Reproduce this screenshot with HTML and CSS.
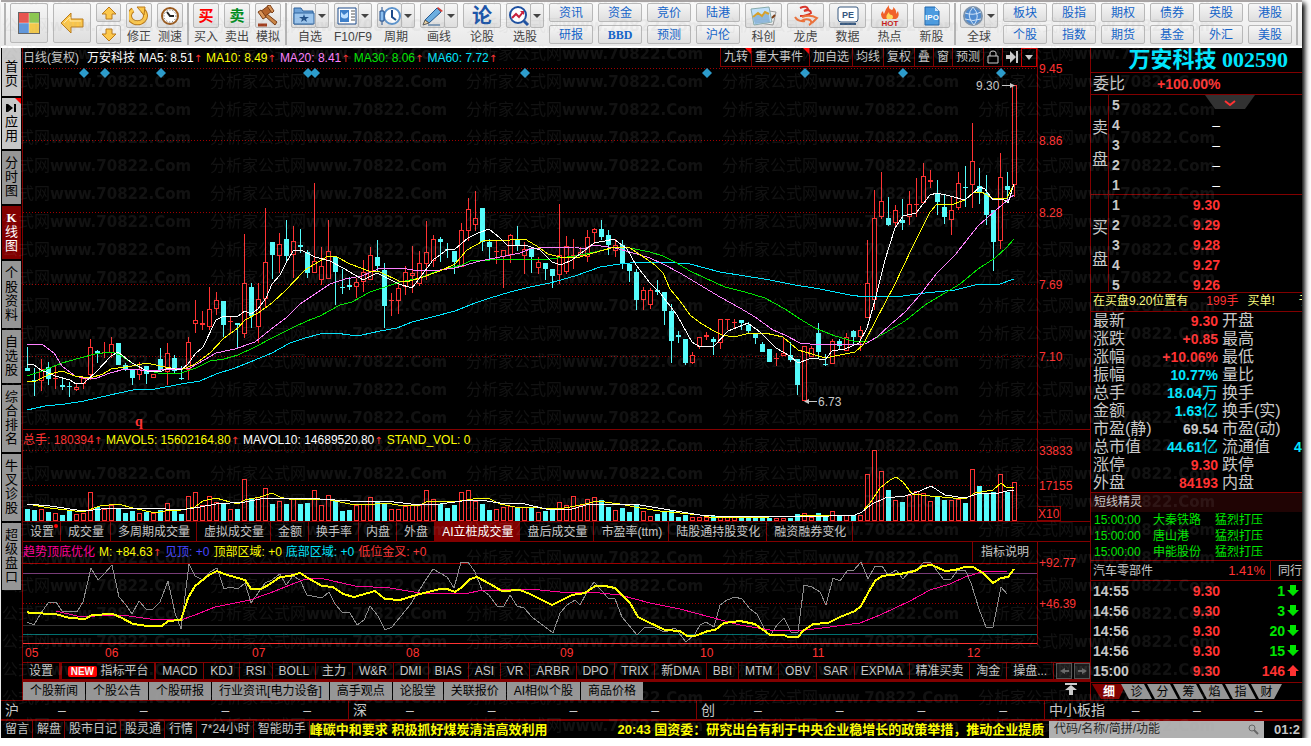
FILE: index.html
```html
<!DOCTYPE html>
<html lang="zh-CN">
<head>
    <meta charset="UTF-8">
    <meta name="viewport" content="width=device-width, initial-scale=1.0">
    <title>万安科技 002590</title>
    <link rel="stylesheet" href="styles.css">
</head>
<body>
<div class="app">
    <!-- Toolbar -->
    <header class="toolbar">
        <div class="group">
            <button class="big" aria-label="主页"><svg width="22" height="22" viewBox="0 0 22 22"><path fill="#666" d="M0 0h22v22H0z"/><path fill="#e8564f" d="M1 1h10v10H1z"/><path fill="#8cc751" d="M11 1h10v10H11z"/><path fill="#5f97dd" d="M1 11h10v10H1z"/><path fill="#f3c94b" d="M11 11h10v10H11z"/><path stroke="#fff" stroke-opacity=".4" d="M11 1v20M1 11h20"/></svg></button>
            <button class="big" aria-label="后退"><svg width="24" height="22" viewBox="0 0 24 22"><path d="M1 11 11 1v6h12v8H11v6z" fill="#fcc84c" stroke="#b97a1c"/><path d="M4 11l6-6v4h11" fill="none" stroke="#ffe9a8"/></svg></button>
            <div class="pair arrows">
                <button aria-label="向上"><svg width="16" height="14" viewBox="0 0 16 14"><path d="M8 1l7 7h-4v5H5V8H1z" fill="#fcc84c" stroke="#b97a1c"/></svg></button>
                <button aria-label="向下"><svg width="16" height="14" viewBox="0 0 16 14"><path d="M8 13l7-7h-4V1H5v5H1z" fill="#fcc84c" stroke="#b97a1c"/></svg></button>
            </div>
            <div class="tool small"><button id="t1"><svg width="20" height="20" viewBox="0 0 20 20"><path d="M4 4a8 7 0 1 0 9 0" fill="none" stroke="#b97a1c" stroke-width="5"/><path d="M4 4a8 7 0 1 0 9 0" fill="none" stroke="#fcc84c" stroke-width="3"/><path d="M8 1h8l-1 8z" fill="#fcc84c" stroke="#b97a1c"/></svg></button><label for="t1">修正</label></div>
            <div class="tool small"><button id="t2"><svg width="20" height="20" viewBox="0 0 20 20"><circle cx="10" cy="10" r="8" fill="#fff" stroke="#9a5a1e" stroke-width="2"/><circle cx="10" cy="10" r="6" fill="none" stroke="#555" stroke-dasharray="1 2"/><path d="M7 6l3 4h4" fill="none" stroke="#222" stroke-width="2"/></svg></button><label for="t2">测速</label></div>
        </div>
        <div class="group">
            <div class="tool small"><button id="t3" class="buy">买</button><label for="t3">买入</label></div>
            <div class="tool small"><button id="t4" class="sell">卖</button><label for="t4">卖出</label></div>
            <div class="tool small"><button id="t5"><svg width="22" height="22" viewBox="0 0 22 22"><path d="M10 9l10 8-2 3L8 11z" fill="#c98545" stroke="#7a3d16"/><path d="M3 7l8-6 4 5-8 6z" fill="#b5652c" stroke="#7a3d16"/><path d="M1 7l3-2 5 7-3 2zM10 1l3-1 4 6-2 2z" fill="#d9965a" stroke="#7a3d16"/><path d="M1 20h9" stroke="#a03c1c" stroke-width="3"/></svg></button><label for="t5">模拟</label></div>
        </div>
        <div class="group">
            <div class="tool"><div class="split"><button id="t6"><svg width="22" height="20" viewBox="0 0 22 20"><path d="M1 2h7l2 3h10v13H1z" fill="#6fa3d8" stroke="#2f639c"/><path d="M1 7h20v11H1z" fill="#9cc6ee" stroke="#2f639c"/><path d="M11 8l1 3h4l-3 2 1 3-3-2-3 2 1-3-3-2h4z" fill="#1f4e86"/></svg></button><button class="drop" aria-label="自选菜单"></button></div><label for="t6">自选</label></div>
            <div class="tool"><div class="split"><button id="t7"><svg width="20" height="18" viewBox="0 0 20 18"><path d="M1 1h18v16H1z" fill="#fff" stroke="#1c4a8a"/><path d="M3 3h9v12H3z" fill="#3e7fc9"/><path d="M4 5l3 3 4-3v5q-3 3-7 0z" fill="#bfe0ff"/><path d="M14 4h4M14 7h4M14 10h4M14 13h4" stroke="#555"/></svg></button><button class="drop" aria-label="F10菜单"></button></div><label for="t7">F10/F9</label></div>
            <div class="tool"><div class="split"><button id="t8"><svg width="22" height="20" viewBox="0 0 22 20"><circle cx="13" cy="10" r="8" fill="#fff" stroke="#5c93cc" stroke-width="2"/><path d="M13 4v7l4 3" fill="none" stroke="#1c4a8a" stroke-width="2"/><path d="M3 1v18" stroke="#1c4a8a"/><path d="M1 5h4v10H1z" fill="#8cc0f0" stroke="#1c4a8a"/></svg></button><button class="drop" aria-label="周期菜单"></button></div><label for="t8">周期</label></div>
            <div class="tool"><div class="split"><button id="t9"><svg width="22" height="20" viewBox="0 0 22 20"><path d="M3 14L15 2l4 4L7 17z" fill="#6caee0" stroke="#25588f"/><path d="M15 2l1-1 5 4-2 1z" fill="#d43e36"/><path d="M3 14l4 3-6 2z" fill="#f2d6a0" stroke="#555"/><path d="M6 19h12" stroke="#25588f"/></svg></button><button class="drop" aria-label="画线菜单"></button></div><label for="t9">画线</label></div>
            <div class="tool"><button id="t10" class="forum">论</button><label for="t10">论股</label></div>
            <div class="tool"><div class="split"><button id="t11"><svg width="22" height="22" viewBox="0 0 22 22"><circle cx="10" cy="10" r="8" fill="#fff" stroke="#1c4fa0" stroke-width="2"/><path d="M16 16l4 4" stroke="#1c4fa0" stroke-width="3"/><path d="M4 13l4-4 3 3 4-5" fill="none" stroke="#c8203c" stroke-width="2"/><path d="M12 6h4v4z" fill="#c8203c"/></svg></button><button class="drop" aria-label="选股菜单"></button></div><label for="t11">选股</label></div>
            <div class="pair"><button>资讯</button><button>研报</button></div>
            <div class="pair"><button>资金</button><button class="serif">BBD</button></div>
            <div class="pair"><button>竞价</button><button>预测</button></div>
            <div class="pair"><button>陆港</button><button>沪伦</button></div>
            <div class="tool mid"><button id="t12"><svg width="28" height="20" viewBox="0 0 28 20"><path d="M12 4l14 2-3 13-14-2z" fill="#eee" stroke="#999"/><path d="M1 3l18-2 3 15-18 3z" fill="#bfe0fa" stroke="#8aa"/><path d="M3 12l5-4 4 3 3-4 4 2 1 7-15 2z" fill="#8fb8dc"/><path d="M3 11l5-4 4 3 3-4 4 2" fill="none" stroke="#d6a02c" stroke-width="2"/><path d="M22 12l3-3" stroke="#7a3d16" stroke-width="2"/></svg></button><label for="t12">科创</label></div>
            <div class="tool mid"><button id="t13"><svg width="28" height="22" viewBox="0 0 28 22"><path d="M8 3q7-3 8 1l-4 2q7-2 7 2-4 3-11 3" fill="none" stroke="#d8362c" stroke-width="2"/><path d="M10 12q8-3 15 1l-5 5M9 16q5-3 9-1 3 3-1 5M3 12q3 5 10 4" fill="none" stroke="#ee7038" stroke-width="2"/></svg></button><label for="t13">龙虎</label></div>
            <div class="tool mid"><button id="t14"><svg width="22" height="20" viewBox="0 0 22 20"><path d="M1 3q0-2 2-2h16q2 0 2 2v10q0 3-3 3H4q-3 0-3-3z" fill="#fff" stroke="#35577f"/><path d="M3 18h16" stroke="#35577f" stroke-width="2"/><text x="11" y="12" text-anchor="middle" class="pe">PE</text></svg></button><label for="t14">数据</label></div>
            <div class="tool mid"><button id="t15"><svg width="22" height="22" viewBox="0 0 22 22"><path d="M4 14q-4-5 0-8 0 2 1 3Q7 3 10 0q-1 4 3 5 2-1 1-3 4 3 3 7l2-3q2 6-2 8z" fill="#f0622a"/><path d="M8 14q-2-3 2-7 0 3 3 3 2 2 0 4z" fill="#ffd85a"/><text x="11" y="21" text-anchor="middle" class="hot">HOT</text></svg></button><label for="t15">热点</label></div>
            <div class="tool mid"><button id="t16"><svg width="18" height="20" viewBox="0 0 18 20"><path d="M2 1h10l4 4v14H2z" fill="#4b9be0" stroke="#1f66ad"/><path d="M12 1v4h4z" fill="#cfe6fb"/><text x="9" y="14" text-anchor="middle" class="ipo">IPO</text></svg></button><label for="t16">新股</label></div>
        </div>
        <div class="group">
            <div class="tool"><div class="split"><button id="t17"><svg width="22" height="22" viewBox="0 0 22 22"><circle cx="11" cy="11" r="9" fill="#4f8bd0" stroke="#7d93ab" stroke-width="2"/><path d="M3 8q8 3 16-1M3 14q8 3 16 0M11 2q-8 9 1 18M11 2q8 9 1 18" fill="none" stroke="#cfe3f8"/></svg></button><button class="drop" aria-label="全球菜单"></button></div><label for="t17">全球</label></div>
            <div class="pair"><button>板块</button><button>个股</button></div>
            <div class="pair"><button>股指</button><button>指数</button></div>
            <div class="pair"><button>期权</button><button>期货</button></div>
            <div class="pair"><button>债券</button><button>基金</button></div>
            <div class="pair"><button>英股</button><button>外汇</button></div>
            <div class="pair"><button>港股</button><button>美股</button></div>
        </div>
        <div class="group"></div>
    </header>

    <div class="main">
        <nav class="side">
            <a href="#" class="light tall">首页</a>
            <a href="#" class="light flag"><svg width="10" height="10" viewBox="0 0 10 10"><path d="M1 1v8M9 1v8" stroke="#000" stroke-width="2"/><path d="M2 1l5 4-5 4z"/></svg>应用</a>
            <a href="#">分时图</a>
            <a href="#" class="on"><b>K</b>线图</a>
            <a href="#">个股资料</a>
            <a href="#">自选股</a>
            <a href="#">综合排名</a>
            <a href="#">牛叉诊股</a>
            <a href="#">超级盘口</a>
        </nav>

        <main class="center">
            <section class="pane price">
                <div class="info">
                    <span>日线(复权)</span><span class="white name">万安科技</span>
                    <span class="white">MA5: 8.51<i>↑</i></span><span class="yellow">MA10: 8.49<i>↑</i></span><span class="pink">MA20: 8.41<i>↑</i></span><span class="green">MA30: 8.06<i>↑</i></span><span class="cyan">MA60: 7.72<i>↑</i></span>
                    <div class="actions">
                        <button class="flag">九转</button><button class="flag wide">重大事件</button><button>加自选</button><button>均线</button><button>复权</button><button>叠</button><button>窗</button><button>预测</button>
                        <button aria-label="锁定"><svg width="12" height="14" viewBox="0 0 12 14"><path d="M1 6h10v7H1zM3 6V3q0-2 3-2t3 2v3" fill="none" stroke="#ccc"/></svg></button>
                        <button aria-label="末端"><svg width="12" height="12" viewBox="0 0 12 12"><path d="M0 4h4V0l6 6-6 6V8H0z" fill="#ccc"/><path d="M11 0v12" stroke="#ccc" stroke-width="2"/></svg></button>
                        <button class="more" aria-label="更多"><svg width="8" height="5" viewBox="0 0 8 5"><path d="M0 0h8L4 5z" fill="#ccc"/></svg></button>
                    </div>
                </div>
                <svg class="plot" id="pricePlot" viewBox="23 67 1014 362" preserveAspectRatio="none"></svg>
                <ul class="axis"><li>9.45</li><li>8.86</li><li>8.28</li><li>7.69</li><li>7.10</li></ul>
            </section>

            <section class="pane volume">
                <div class="info">
                    <span class="red">总手: 180394<i>↑</i></span><span class="yellow">MAVOL5: 15602164.80<i>↑</i></span><span class="white">MAVOL10: 14689520.80<i>↑</i></span><span class="yellow">STAND_VOL: 0</span>
                </div>
                <svg class="plot" id="volumePlot" viewBox="23 449 1014 72" preserveAspectRatio="none"></svg>
                <ul class="axis"><li>33833</li><li>17155</li><li class="unit">X10</li></ul>
            </section>

            <nav class="tabs">
                <button class="dot">设置</button><button>成交量</button><button>多周期成交量</button><button>虚拟成交量</button><button>金额</button><button>换手率</button><button>内盘</button><button>外盘</button><button class="on">AI立桩成交量</button><button>盘后成交量</button><button>市盈率(ttm)</button><button>陆股通持股变化</button><button>融资融券变化</button>
            </nav>

            <section class="pane trend">
                <div class="info">
                    <span class="magenta">趋势顶底优化</span><span class="yellow">M: +84.63<i>↑</i></span><span class="blue">见顶: +0</span><span class="yellow">顶部区域: +0</span><span class="cyan">底部区域: +0</span><span class="red">低位金叉: +0</span>
                    <button class="explain">指标说明</button>
                </div>
                <svg class="plot" id="trendPlot" viewBox="23 562 1014 83" preserveAspectRatio="none"></svg>
                <ul class="axis"><li>+92.77</li><li>+46.39</li></ul>
            </section>

            <div class="dates"><span>05</span><span>06</span><span>07</span><span>08</span><span>09</span><span>10</span><span>11</span><span>12</span></div>

            <nav class="tabs indicators">
                <button>设置</button><button class="new"><em>NEW</em> 指标平台</button><button>MACD</button><button>KDJ</button><button>RSI</button><button>BOLL</button><button>主力</button><button>W&amp;R</button><button>DMI</button><button>BIAS</button><button>ASI</button><button>VR</button><button>ARBR</button><button>DPO</button><button>TRIX</button><button>新DMA</button><button>BBI</button><button>MTM</button><button>OBV</button><button>SAR</button><button>EXPMA</button><button>精准买卖</button><button>淘金</button><button>操盘...</button>
                <button class="scroll" aria-label="左移"><svg width="9" height="6" viewBox="0 0 9 6"><path d="M0 3l5-3v2h4v2H5v2z" fill="#666"/></svg></button><button class="scroll" aria-label="右移"><svg width="9" height="6" viewBox="0 0 9 6"><path d="M9 3L4 0v2H0v2h4v2z" fill="#666"/></svg></button>
            </nav>

            <nav class="news">
                <button>个股新闻</button><button>个股公告</button><button>个股研报</button><button>行业资讯[电力设备]</button><button>高手观点</button><button>论股堂</button><button>关联报价</button><button>AI相似个股</button><button>商品价格</button>
                <button class="top" aria-label="展开"><svg width="12" height="12" viewBox="0 0 12 12"><path d="M0 0h12v2H0zM6 2l6 5H8v5H4V7H0z" fill="#ccc"/></svg></button>
            </nav>
        </main>

        <aside class="quote">
            <h1>万安科技 002590</h1>
            <div class="ratio"><span>委比</span><b>+100.00%</b></div>
            <div class="levels">
                <div class="sidename">卖盘</div>
                <table>
                    <tr><th>5</th><td></td></tr>
                    <tr><th>4</th><td class="white">–</td></tr>
                    <tr><th>3</th><td class="white">–</td></tr>
                    <tr><th>2</th><td class="white">–</td></tr>
                    <tr><th>1</th><td class="white">–</td></tr>
                </table>
                <button class="fold" aria-label="展开盘口"><svg width="12" height="7" viewBox="0 0 12 7"><path d="M1 1l5 4 5-4" fill="none" stroke="#ff3232" stroke-width="2"/></svg></button>
            </div>
            <div class="levels bids">
                <div class="sidename">买盘</div>
                <table>
                    <tr><th>1</th><td>9.30</td></tr>
                    <tr><th>2</th><td>9.29</td></tr>
                    <tr><th>3</th><td>9.28</td></tr>
                    <tr><th>4</th><td>9.27</td></tr>
                    <tr><th>5</th><td>9.26</td></tr>
                </table>
            </div>
            <div class="notice"><span>在买盘9.20位置有</span><span class="red">199手</span><span>买单!</span><span class="next">于</span></div>
            <table class="detail">
                <tr><th>最新</th><td>9.30</td><th>开盘</th><td></td></tr>
                <tr><th>涨跌</th><td>+0.85</td><th>最高</th><td></td></tr>
                <tr><th>涨幅</th><td>+10.06%</td><th>最低</th><td></td></tr>
                <tr><th>振幅</th><td class="cyan">10.77%</td><th>量比</th><td></td></tr>
                <tr><th>总手</th><td class="cyan">18.04<span>万</span></td><th>换手</th><td></td></tr>
                <tr><th>金额</th><td class="cyan">1.63<span>亿</span></td><th>换手(实)</th><td></td></tr>
                <tr><th>市盈(静)</th><td class="gray">69.54</td><th>市盈(动)</th><td></td></tr>
                <tr><th>总市值</th><td class="cyan">44.61<span>亿</span></td><th>流通值</th><td class="cyan">4</td></tr>
                <tr><th>涨停</th><td>9.30</td><th>跌停</th><td></td></tr>
                <tr><th>外盘</th><td>84193</td><th>内盘</th><td></td></tr>
            </table>
            <h2>短线精灵</h2>
            <table class="alerts">
                <tr><td>15:00:00</td><td>大秦铁路</td><td>猛烈打压</td></tr>
                <tr><td>15:00:00</td><td>唐山港</td><td>猛烈打压</td></tr>
                <tr><td>15:00:00</td><td>申能股份</td><td>猛烈打压</td></tr>
            </table>
            <div class="sector"><span>汽车零部件</span><span class="red">1.41%</span><a href="#">同行</a></div>
            <table class="ticks">
                <tr><th>14:55</th><td>9.30</td><td class="down">1</td><td><svg width="12" height="12" viewBox="0 0 12 12"><path d="M3 0h6v5h3l-6 6-6-6h3z" fill="#00e600"/></svg></td></tr>
                <tr><th>14:56</th><td>9.30</td><td class="down">3</td><td><svg width="12" height="12" viewBox="0 0 12 12"><path d="M3 0h6v5h3l-6 6-6-6h3z" fill="#00e600"/></svg></td></tr>
                <tr><th>14:56</th><td>9.30</td><td class="down">20</td><td><svg width="12" height="12" viewBox="0 0 12 12"><path d="M3 0h6v5h3l-6 6-6-6h3z" fill="#00e600"/></svg></td></tr>
                <tr><th>14:56</th><td>9.30</td><td class="down">15</td><td><svg width="12" height="12" viewBox="0 0 12 12"><path d="M3 0h6v5h3l-6 6-6-6h3z" fill="#00e600"/></svg></td></tr>
                <tr><th>15:00</th><td>9.30</td><td>146</td><td><svg width="12" height="12" viewBox="0 0 12 12"><path d="M3 11h6V6h3L6 0 0 6h3z" fill="#ff3232"/></svg></td></tr>
            </table>
            <nav class="slants"><button class="on">细</button><button>诊</button><button>分</button><button>筹</button><button>焰</button><button>指</button><button>财</button></nav>
        </aside>
    </div>

    <div class="indexes">
        <div><span>沪</span><i>–</i><i>–</i><i>–</i><i>–</i></div>
        <div><span>深</span><i>–</i><i>–</i><i>–</i><i>–</i></div>
        <div><span>创</span><i>–</i><i>–</i><i>–</i><i>–</i></div>
        <div class="sme"><span>中小板指</span><i>–</i><i>–</i><i>–</i></div>
    </div>

    <footer class="status">
        <a href="#">留言</a><a href="#">解盘</a><a href="#">股市日记</a><a href="#">股灵通</a><a href="#">行情</a><a href="#">7*24小时</a><a href="#">智能助手</a>
        <div class="marquee"><span>峰碳中和要求 积极抓好煤炭清洁高效利用</span><span>20:43 国资委：研究出台有利于中央企业稳增长的政策举措，推动企业提质</span></div>
        <div class="search"><input type="text" placeholder="代码/名称/简拼/功能" aria-label="代码/名称/简拼/功能"><svg width="11" height="11" viewBox="0 0 11 11"><circle cx="4" cy="4" r="3" fill="none" stroke="#666"/><path d="M6 6l4 4" stroke="#666" stroke-width="2"/></svg></div>
        <time>01:2</time>
    </footer>

    <svg class="watermark" aria-hidden="true">
        <defs>
            <pattern id="mark" x="-46" y="11" width="256" height="28" patternUnits="userSpaceOnUse">
                <text x="0" y="20" class="mark-cn">分析家公式网</text>
                <text x="96" y="20" class="mark-en">www.70822.Com</text>
            </pattern>
        </defs>
        <rect width="100%" height="100%" fill="url(#mark)"/>
    </svg>
</div>
<script src="script.js"></script>
</body>
</html>
```
FILE: styles.css
```css
* {
    box-sizing: border-box;
}
body {
    margin: 0;
    background: #fff;
    color: #c8c8c8;
    font: 12px/18px "Liberation Sans", "Noto Sans CJK SC", sans-serif;
    overflow: hidden;
}
button, input {
    font: inherit;
    color: inherit;
    margin: 0;
    padding: 0;
    border: 0;
    background: none;
}
a {
    color: inherit;
    text-decoration: none;
}
i, em {
    font-style: normal;
}
table {
    border-collapse: collapse;
    table-layout: fixed;
}
th, td {
    padding: 0;
}
ul {
    list-style: none;
    margin: 0;
    padding: 0;
}
.white { color: #fff; }
.yellow { color: #ff0; }
.pink { color: #ff80ff; }
.green { color: #00e600; }
.cyan { color: #00e6ff; }
.red { color: #ff3232; }
.magenta { color: #ff0096; }
.blue { color: #4646ff; }

.app {
    position: relative;
    display: flex;
    flex-direction: column;
    height: calc(100vh - 8px);
    margin: 0 9px 0 1px;
    background: #000;
    overflow: hidden;
    box-shadow: 3px 3px 5px #000;
}

/* toolbar */
.toolbar {
    display: flex;
    height: 48px;
    flex: none;
    padding: 1px 0 1px 3px;
    background: linear-gradient(#fafafa, #e8e8e8);
    border-top: 2px solid #a8a4a4;
    border-bottom: 2px solid #fff;
    color: #444;
    overflow: hidden;
}
.group {
    display: flex;
    flex: none;
    gap: 5px;
    margin-right: 4px;
    padding-left: 4px;
    border-left: 2px solid #b4b4b4;
}
.toolbar button {
    display: flex;
    align-items: center;
    justify-content: center;
    border: 1px solid #b8b8b8;
    border-radius: 2px;
    background: linear-gradient(#f6f6f6, #dedede);
}
.toolbar .big {
    width: 38px;
    height: 40px;
}
.pair {
    display: flex;
    flex-direction: column;
    gap: 3px;
    width: 44px;
    color: #1464c8;
}
.toolbar .pair button {
    height: 19px;
    width: 100%;
    line-height: 16px;
}
.pair.arrows {
    width: 25px;
}
.pair .serif {
    font-family: "Liberation Serif", serif;
    font-weight: bold;
}
.tool {
    display: flex;
    flex-direction: column;
    width: 38px;
    text-align: center;
    white-space: nowrap;
}
.tool.small {
    width: 26px;
}
.tool.mid {
    width: 37px;
}
.tool button {
    flex: none;
    height: 25px;
    width: 100%;
}
.tool label {
    flex: none;
    line-height: 19px;
}
.split {
    display: flex;
    flex: none;
}
.split button {
    flex: 1;
}
.split .drop {
    width: 14px;
    flex: none;
    margin-left: -1px;
}
.drop::after {
    content: "";
    border: 4px solid transparent;
    border-top-color: #444;
    border-bottom: 0;
}
.toolbar .buy, .toolbar .sell {
    font-size: 15px;
    font-weight: bold;
    color: #f00;
}
.toolbar .sell {
    color: #008c1e;
}
.toolbar .forum {
    font-size: 20px;
    font-weight: bold;
    color: #1c55a8;
}
.pe, .hot, .ipo {
    font: bold 9px "Liberation Sans", sans-serif;
    fill: #35577f;
}
.hot {
    font-size: 8px;
    fill: #c81414;
}
.ipo {
    font-size: 8px;
    fill: #fff;
}

/* left navigation */
.main {
    display: flex;
    flex: 1;
    min-height: 0;
}
.side {
    display: flex;
    flex-direction: column;
    gap: 2px;
    width: 21px;
    flex: none;
    padding: 0 1px;
}
.side a {
    position: relative;
    padding: 5px 3px 6px;
    background: #969696;
    color: #000;
    font-size: 13px;
    line-height: 14px;
    text-align: center;
    word-break: break-all;
}
.side .light {
    background: #c8c8c8;
}
.side .tall {
    padding-top: 12px;
    padding-bottom: 8px;
}
.side .on {
    background: #820000;
    color: #fff;
}
.side svg {
    display: block;
    margin: 0 1px 2px;
}
.side b {
    font-family: "Liberation Serif", serif;
    display: block;
}
.flag {
    position: relative;
}
.flag::after {
    content: "";
    position: absolute;
    top: 0;
    right: 0;
    border: 3px solid #f00;
    border-left-color: transparent;
    border-bottom-color: transparent;
}

/* charts */
.center {
    display: flex;
    flex-direction: column;
    flex: 1;
    min-width: 0;
    border-left: 1px solid #820000;
}
.pane {
    display: grid;
    grid-template-columns: 1fr 53px;
    grid-template-rows: 19px 1fr;
    border-bottom: 1px solid #820000;
}
.price {
    flex: 1;
    min-height: 0;
}
.volume {
    height: 92px;
}
.trend {
    height: 103px;
    grid-template-rows: 20px 1fr;
    border-bottom: 0;
}
.info {
    display: flex;
    gap: 4px;
    min-width: 0;
    line-height: 20px;
    white-space: nowrap;
}
.info i {
    color: #ff3232;
    font-family: "DejaVu Sans", sans-serif;
    font-size: 10px;
    line-height: 12px;
}
.name {
    margin-left: 4px;
}
.actions {
    display: flex;
    margin-left: auto;
}
.actions button {
    display: flex;
    align-items: center;
    padding: 0 3px;
    border-left: 1px solid #820000;
    border-bottom: 1px solid #820000;
}
.actions .wide {
    padding-right: 6px;
}
.actions .more {
    border: 1px solid #c80000;
}
.explain {
    margin-left: auto;
    padding: 0 8px;
    border-left: 1px solid #820000;
}
.plot {
    display: block;
    width: 100%;
    height: 100%;
    min-height: 0;
    grid-column: 1;
    grid-row: 2;
}
.plot text {
    font-size: 12px;
    fill: #c8c8c8;
}
.plot .sign {
    font: bold 14px "Liberation Serif", serif;
    fill: #ff3232;
}
.axis {
    display: flex;
    flex-direction: column;
    grid-column: 2;
    grid-row: 1 / 3;
    padding: 13px 0 8px 1px;
    border-left: 1px solid #820000;
    color: #ff3232;
    line-height: 16px;
}
.axis li {
    flex: 1;
}
.volume li, .trend li {
    flex: none;
    height: 35px;
}
.volume .axis {
    position: relative;
    padding-bottom: 0;
}
.volume .unit {
    position: absolute;
    left: 0;
    bottom: 0;
    height: 15px;
    line-height: 14px;
    padding-right: 1px;
    border: 1px solid #820000;
    border-left: 0;
}
.trend li {
    height: 41px;
}
.dates {
    display: grid;
    grid-template-columns: 80fr 147fr 154fr 154fr 140fr 112fr 155fr 70fr;
    height: 17px;
    padding: 0 53px 0 2px;
    color: #ff3232;
    line-height: 16px;
}

/* tab rows */
.tabs {
    display: flex;
    height: 20px;
    border-bottom: 1px solid #820000;
    white-space: nowrap;
}
.tabs button {
    position: relative;
    padding: 0 6px 0 7px;
    border-right: 1px solid #820000;
    line-height: 18px;
}
.tabs .on {
    background: #820000;
    color: #fff;
}
.tabs .dot::after {
    content: "";
    position: absolute;
    top: 2px;
    right: 2px;
    width: 4px;
    height: 4px;
    border-radius: 2px;
    background: #f00;
}
.indicators {
    border-top: 1px solid #820000;
    border-bottom-width: 3px;
}
.indicators button {
    flex: 1 1 auto;
    padding: 0 2px;
    line-height: 16px;
}
.indicators .new {
    border-left: 2px solid #820000;
    border-right-width: 2px;
}
.indicators em {
    display: inline-block;
    padding: 0 3px;
    border-radius: 2px;
    background: #f00;
    color: #fff;
    font-size: 10px;
    font-weight: bold;
    line-height: 11px;
}
.indicators .scroll {
    display: flex;
    align-items: center;
    justify-content: center;
    flex: none;
    width: 16px;
    margin-left: 2px;
    border: 1px solid #555;
    background: #1c1c1c;
}
.news {
    display: flex;
    gap: 1px;
    height: 18px;
    white-space: nowrap;
}
.news button {
    padding: 0 7px;
    background: #969696;
    color: #000;
    line-height: 17px;
}
.news .top {
    margin-left: auto;
    margin-right: 6px;
    background: none;
}

/* quote panel */
.quote {
    width: 212px;
    flex: none;
    border-left: 1px solid #820000;
    overflow: hidden;
    white-space: nowrap;
    font-size: 16px;
}
.quote b, .quote td {
    font: bold 14px/18px "Liberation Sans", "Noto Sans CJK SC", sans-serif;
    color: #ff3232;
}
.quote th {
    font-weight: normal;
    text-align: left;
}
h1 {
    margin: 0;
    padding-right: 14px;
    height: 25px;
    border-bottom: 1px solid #820000;
    color: #00e6ff;
    font: bold 22px/24px "Liberation Serif", "Noto Sans CJK SC", serif;
    text-align: right;
}
.ratio {
    display: flex;
    gap: 32px;
    height: 22px;
    padding-left: 2px;
    border-bottom: 1px solid #820000;
    line-height: 22px;
}
.quote .ratio b {
    line-height: 22px;
}
.levels {
    position: relative;
    display: flex;
    height: 100px;
    border-bottom: 1px solid #820000;
}
.bids {
    height: 98px;
}
.sidename {
    width: 18px;
    padding: 17px 1px 0;
    border-right: 1px solid #820000;
    line-height: 32px;
    white-space: normal;
}
.levels table {
    width: 111px;
    height: 100px;
}
.levels tr, .ticks tr {
    height: 20px;
}
.levels th {
    width: 16px;
    padding-left: 3px;
    font: bold 14px/18px "Liberation Sans", sans-serif;
}
.levels td {
    text-align: right;
}
.quote td.white {
    color: #fff;
    font-weight: normal;
}
.quote td.cyan { color: #00e6ff; }
.quote td.gray { color: #c8c8c8; }
.quote td.down { color: #00e600; }
.fold {
    position: absolute;
    left: 114px;
    top: 0;
    width: 50px;
    height: 14px;
    background: #323232;
    clip-path: polygon(0 0, 100% 0, 40px 100%, 10px 100%);
    line-height: 10px;
}
.notice {
    display: flex;
    height: 19px;
    padding-left: 2px;
    border-bottom: 1px solid #820000;
    color: #ffff80;
    font-size: 12px;
    line-height: 17px;
}
.notice .red {
    margin: 0 9px 0 18px;
}
.notice .next {
    margin-left: 24px;
}
.detail {
    width: 211px;
}
.detail tr {
    height: 18px;
}
.detail th {
    width: 60px;
    padding-left: 2px;
    line-height: 18px;
}
.detail td {
    width: 67px;
    text-align: right;
}
.detail td + th {
    width: 76px;
    padding-left: 4px;
}
.detail td:last-child {
    width: auto;
    text-align: left;
}
.detail td span {
    font-size: 16px;
    font-weight: normal;
}
h2 {
    margin: 0;
    padding-left: 3px;
    height: 20px;
    border-top: 1px solid #820000;
    background: #200404;
    font-size: 12px;
    font-weight: normal;
    line-height: 19px;
}
.alerts {
    width: 100%;
}
.alerts tr {
    height: 16px;
}
.quote .alerts td {
    padding-left: 3px;
    color: #00e600;
    font-size: 12px;
    font-weight: normal;
    line-height: 16px;
}
.alerts td:first-child {
    width: 59px;
}
.alerts td:nth-child(2) {
    width: 62px;
}
.sector {
    display: flex;
    height: 21px;
    padding-left: 2px;
    border-top: 1px solid #820000;
    border-bottom: 1px solid #820000;
    font-size: 12px;
    line-height: 20px;
}
.sector .red {
    margin: 0 5px 0 auto;
    font-size: 13px;
}
.sector a {
    width: 32px;
    padding-left: 7px;
    border-left: 1px solid #820000;
}
.ticks {
    width: 210px;
    margin-bottom: 1px;
}
.ticks th {
    width: 60px;
    padding-left: 2px;
    font: bold 14px/20px "Liberation Sans", sans-serif;
}
.ticks td {
    width: 69px;
    text-align: right;
}
.ticks td:nth-child(3) {
    width: 65px;
}
.ticks td:last-child {
    width: auto;
    padding-right: 2px;
    line-height: 10px;
}
.slants {
    display: flex;
    height: 18px;
    padding: 1px 0 1px 1px;
    border-top: 1px solid #820000;
}
.slants button {
    width: 31px;
    margin-right: -5px;
    background: #969696;
    color: #000;
    font-size: 12px;
    line-height: 16px;
    clip-path: polygon(0 0, 23px 0, 100% 100%, 8px 100%);
}
.slants .on {
    width: 34px;
    background: #820000;
    color: #fff;
    font-weight: bold;
    clip-path: polygon(0 0, 100% 0, 27px 100%, 9px 100%);
}
.slants button:last-child {
    clip-path: polygon(0 0, 100% 0, 23px 100%, 8px 100%);
}

/* bottom rows */
.indexes {
    display: flex;
    flex: none;
    height: 21px;
    border-top: 1px solid #820000;
    border-bottom: 2px solid #820000;
    font-size: 14px;
}
.indexes div {
    display: flex;
    flex: 1;
    padding-left: 4px;
    border-right: 1px solid #820000;
}
.indexes span {
    width: 16px;
}
.indexes i {
    flex: 1;
    text-align: center;
}
.indexes .sme {
    flex: 0 0 257px;
    padding-right: 13px;
    border-right: 0;
}
.indexes .sme span {
    width: 56px;
}
.status {
    display: flex;
    flex: none;
    height: 17px;
    line-height: 17px;
    white-space: nowrap;
}
.status a {
    padding: 0 3px 0 4px;
    border-right: 1px solid #820000;
}
.marquee {
    display: flex;
    gap: 70px;
    flex: 1;
    min-width: 0;
    overflow: hidden;
    color: #ff0;
    font-size: 13px;
    font-weight: bold;
}
.search {
    display: flex;
    align-items: center;
    width: 215px;
    padding: 0 5px;
    background: #b0b0b0;
}
.search input {
    flex: 1;
    min-width: 0;
    height: 17px;
    color: #000;
}
.search input::placeholder {
    color: #222;
    opacity: 1;
}
.status time {
    width: 38px;
    padding-left: 10px;
    font-size: 13px;
    font-weight: bold;
}
.watermark {
    position: absolute;
    left: -1px;
    top: 0;
    width: calc(100% - 87px);
    height: 100%;
    pointer-events: none;
    opacity: .11;
}
.mark-cn {
    font: 16px "Noto Sans CJK SC", sans-serif;
    fill: #a0a0a0;
}
.mark-en {
    font: bold 15px "DejaVu Sans", sans-serif;
    fill: #a0a0a0;
}
```
FILE: script.js
```js
// one candle per entry: high, body top, body bottom, low, direction, volume
const candles = `
347 368 371 371 d 12|368 380 381 396 d 11|359 369 381 391 u 12|362 367 379 385 d 9|366 378 379 389 u 8|378 385 387 390 d 6
382 386 387 397 d 10|384 387 390 391 u 7|377 378 384 389 u 8|339 347 375 380 u 29|350 351 353 363 d 14|342 352 353 358 u 12
337 344 353 358 u 16|343 343 365 365 d 12|363 365 370 371 d 8|369 369 378 385 d 10|362 369 375 380 u 8|366 366 374 384 d 9
374 374 378 378 u 8|348 359 370 371 d 11|343 353 372 385 u 18|355 358 371 373 d 11|366 378 379 380 d 7|337 342 370 380 u 25
300 320 324 333 u 29|311 323 325 330 u 16|287 309 327 330 u 25|292 300 309 315 u 19|301 301 325 337 d 17|317 321 322 334 u 12
323 323 325 348 d 12|234 283 334 338 u 42|283 287 316 328 d 23|283 299 327 343 u 24|208 262 299 307 u 33|242 242 255 279 d 17
233 244 256 273 u 20|220 239 256 262 d 17|226 241 255 278 u 23|229 245 247 253 d 17|250 252 273 278 d 18|183 261 273 273 u 31
247 266 280 285 u 16|220 251 279 279 u 26|257 257 272 305 d 21|269 287 288 294 d 10|277 285 287 290 d 11|278 282 287 298 u 16
260 272 282 292 u 17|247 255 280 280 u 24|240 257 266 272 d 19|263 270 306 328 d 17|293 300 301 316 u 12|280 288 301 314 u 12
266 272 287 295 u 15|246 273 276 293 u 16|251 263 284 286 u 16|221 252 264 280 u 31|235 239 261 267 u 22|237 239 242 262 d 17
243 249 250 258 d 13|251 251 262 274 d 16|223 230 267 267 u 29|198 209 231 241 u 31|191 218 225 231 u 20|208 208 242 251 d 17
239 242 247 260 d 11|241 251 252 264 u 12|250 250 257 288 u 14|234 235 255 263 u 15|226 239 246 251 d 13|242 249 256 274 u 14
248 248 257 273 d 14|257 262 268 274 u 9|263 263 269 280 d 10|269 269 276 288 d 11|204 255 275 284 u 19|236 246 272 274 u 16
239 255 257 269 u 25|247 252 256 256 u 16|230 237 257 262 u 22|228 229 233 244 u 24|220 229 237 240 d 21|230 235 245 255 d 14
239 245 251 257 u 11|240 245 264 269 d 13|264 264 271 282 d 9|269 272 300 310 d 17|287 290 300 310 u 10|288 290 305 309 u 5
280 290 292 295 d 7|292 292 311 325 d 9|304 311 341 363 d 11|331 335 337 343 d 4|339 339 363 365 d 6|352 355 363 364 u 4
337 337 347 349 u 4|332 335 337 340 u 4|337 339 342 355 d 5|319 319 343 349 u 4|319 319 320 330 u 4|319 322 323 328 u 4
320 320 323 330 d 3|322 325 331 334 d 4|333 333 338 344 d 5|342 344 352 352 d 4|349 349 362 362 d 3|353 358 359 366 u 3
338 353 356 356 u 3|342 355 360 362 d 3|359 359 385 395 d 7|346 346 401 401 u 8|346 348 357 357 u 4|323 333 352 359 d 8
354 364 365 366 d 4|339 341 364 364 u 10|339 341 346 349 d 5|333 337 351 351 u 6|330 331 337 344 d 6|326 330 337 351 u 6
240 283 318 318 u 47|190 218 300 310 u 71|172 201 217 219 u 50|197 218 225 226 d 31|205 210 223 227 u 21|199 220 223 230 d 19
191 204 217 225 u 26|178 204 205 217 u 30|163 176 203 203 u 28|170 180 182 188 u 20|180 193 202 215 d 25|194 207 217 224 d 21
196 210 220 235 u 21|172 183 208 210 u 22|166 187 188 207 d 18|123 161 185 208 u 52|168 186 192 204 d 35|175 193 215 225 d 27
210 210 242 271 d 29|153 177 241 249 u 47|172 186 190 203 d 29|85 85 185 197 u 39`
    .trim().split(/[|\n]/).map(c => c.split(' '));

const ma5 = '27,365 33,364 41,370 55,376 70,380 76,384 84,383 97,371 111,356 118,352 132,363 147,371 160,372 168,368 181,370 188,364 195,354 203,347 216,320 224,316 238,316 245,311 251,314 258,309 266,298 272,284 280,275 286,263 293,251 301,250 315,257 330,261 345,269 363,280 377,273 385,277 399,284 412,288 425,271 433,260 448,249 455,249 468,238 478,233 489,229 500,238 507,245 528,246 540,250 552,262 561,265 572,260 580,254 594,243 605,241 614,239 627,249 636,265 650,283 660,293 677,315 692,342 700,347 714,346 728,331 748,323 760,332 776,348 790,356 798,363 812,358 825,360 832,351 845,349 859,343 867,328 875,300 885,260 895,228 903,216 916,213 930,195 937,193 950,196 965,200 980,187 985,189 993,200 1003,199 1008,203 1014,184';
const ma10 = '27,381 36,381 50,374 62,371 75,376 90,378 103,374 111,369 132,366 147,363 160,366 181,370 195,364 210,353 224,338 238,328 245,320 258,313 272,303 286,290 305,270 328,256 337,257 350,264 369,271 380,272 399,281 406,282 420,278 440,271 455,264 467,250 483,241 510,240 525,239 540,248 548,254 560,257 580,257 600,251 615,247 630,248 645,258 655,265 663,273 670,289 680,301 690,315 699,322 712,330 722,335 734,337 750,333 765,333 783,337 798,350 812,354 825,358 840,355 855,352 863,345 876,320 895,284 912,248 930,212 937,204 951,205 965,200 973,193 982,192 993,199 1007,198 1014,184';
const ma20 = '27,344 42,344 54,353 62,366 75,376 83,378 97,378 110,373 125,369 140,370 160,370 175,369 190,368 204,360 216,353 235,349 255,342 270,330 286,318 300,304 315,294 330,284 345,279 362,276 378,269 400,268 420,271 440,270 455,268 480,261 500,257 520,253 530,249 540,248 575,247 583,249 594,245 615,248 630,252 650,258 663,264 680,273 700,285 720,297 740,308 755,317 773,330 785,335 800,343 820,345 865,344 877,337 890,325 905,312 920,295 937,273 955,255 978,226 995,211 1010,198 1014,195';
const ma30 = '27,376 42,371 62,363 80,358 95,354 112,352 120,355 132,363 145,370 158,373 181,373 196,368 210,361 224,359 238,355 255,347 272,338 292,328 307,321 320,316 340,305 352,302 370,292 400,282 420,278 440,270 462,265 472,260 490,260 525,259 550,259 575,256 595,252 615,247 630,248 650,252 663,256 675,262 690,271 705,278 725,287 745,292 765,298 785,309 800,319 815,328 835,336 853,341 870,341 885,333 905,321 925,305 945,293 960,284 978,269 995,258 1007,247 1014,239';
const ma60 = '27,410 45,406 65,404 84,401 110,395 133,390 155,389 181,384 200,381 216,374 235,368 255,360 272,353 290,343 305,338 320,334 335,333 350,335 362,335 380,331 397,328 412,322 432,317 455,311 475,303 490,298 510,292 530,287 550,283 575,276 600,267 620,264 640,262 663,262 690,264 720,272 745,276 770,280 795,285 820,289 850,295 865,297 885,296 903,296 925,293 955,290 975,285 1000,284 1014,279';

const vol5 = '27,504 50,508 83,512 100,506 118,504 133,508 155,513 165,511 181,510 195,507 203,501 216,498 230,502 238,504 245,500 260,497 272,493 280,497 293,500 325,499 340,502 350,504 365,505 385,503 405,506 420,505 428,501 460,501 480,498 490,499 500,504 515,507 540,508 558,509 570,507 585,504 597,501 620,504 640,508 660,511 700,515 713,518 770,517 800,516 820,515 855,515 862,512 870,503 880,488 890,480 896,477 903,482 912,494 930,496 965,499 975,493 993,490 1001,483 1007,488 1014,487';
const vol10 = '27,504 50,506 84,511 110,508 150,508 181,510 200,507 216,504 245,502 260,499 290,498 320,499 350,501 385,501 420,505 440,504 470,500 480,500 500,503 525,504 550,510 572,509 590,504 620,504 640,505 670,510 700,515 715,516 770,517 830,516 855,515 862,512 872,504 885,498 905,496 920,491 931,486 945,495 965,498 980,493 995,494 1007,491 1014,490';

const trend = '27,612 30,613 55,614 70,618 85,619 92,615 113,614 122,618 133,624 148,626 162,626 168,621 181,620 188,598 195,586 209,575 217,571 224,574 238,578 245,580 251,589 261,589 270,584 280,577 290,576 300,573 308,578 322,586 333,587 343,594 354,597 375,591 385,599 400,600 420,594 440,589 447,589 455,592 462,587 470,579 477,577 490,584 502,591 520,590 530,594 542,600 552,605 560,601 572,595 585,593 595,586 605,586 615,588 630,603 638,617 648,622 665,630 680,631 687,636 695,636 708,631 715,630 724,623 740,621 755,624 770,635 784,635 788,637 798,637 803,631 813,624 828,623 840,617 855,611 861,606 868,593 875,581 882,576 900,574 915,571 923,566 932,565 945,571 955,570 965,567 973,567 983,573 993,583 1001,578 1008,577 1014,569';
const slow = '56,611 77,616 95,616 122,615 150,619 181,620 195,615 215,607 250,600 270,593 290,585 303,580 320,578 355,586 390,588 420,593 465,594 482,590 500,590 530,589 560,592 590,592 620,595 650,603 680,609 710,617 740,625 770,630 798,631 830,627 860,623 880,615 910,601 930,590 950,584 965,577 985,571 1007,571';
const fast = '27,622 34,625 41,613 48,603 56,602 62,611 77,612 83,602 91,568 98,580 105,573 112,565 119,597 126,605 132,614 139,601 146,609 153,609 160,602 168,581 175,613 181,629 189,564 195,576 203,580 210,572 217,568 224,589 230,587 238,589 245,583 251,603 265,583 272,580 280,574 286,585 293,576 300,580 307,595 322,598 329,592 335,604 342,612 350,613 357,625 364,620 370,606 378,616 385,630 392,627 410,605 425,581 433,569 447,577 454,588 461,562 468,562 475,572 482,590 489,595 497,606 504,606 510,595 517,606 524,608 532,617 553,633 560,613 567,605 575,600 580,605 587,592 594,582 608,598 615,599 622,617 637,635 645,627 652,627 665,632 675,628 686,642 695,634 700,625 706,622 714,627 720,605 727,600 735,597 742,599 750,609 757,614 764,628 770,636 777,625 784,618 791,632 798,632 804,585 812,587 820,592 826,605 833,578 840,581 847,571 854,570 861,562 868,579 875,566 882,566 888,575 896,570 903,579 910,571 917,570 924,562 931,563 944,580 951,579 958,570 965,570 971,583 979,609 986,627 993,627 1001,587 1007,594';

const up = '#ff3232';
const down = '#54fcfc';

function line(points, color, width = 1) {
    return `<polyline points="${points}" fill="none" stroke="${color}" stroke-width="${width}" shape-rendering="crispEdges"/>`;
}

function rule(y, color, dash = 'none') {
    return `<path d="M23 ${y + 0.5}H1037" stroke="${color}" stroke-dasharray="${dash}" shape-rendering="crispEdges"/>`;
}

// red bars are hollow, blue ones filled
function bar(x, top, bottom, dir) {
    const h = Math.max(bottom - top, 1);
    if (dir === 'd' || h < 3) {
        return `<rect x="${x - 2}" y="${top}" width="5" height="${h}" fill="${dir === 'd' ? down : up}"/>`;
    }
    return `<rect x="${x - 1.5}" y="${top + 0.5}" width="4" height="${h - 1}" fill="#000" stroke="${up}"/>`;
}

function drawPrice() {
    let out = [68, 140, 212, 284, 356].map(y => rule(y, '#a00000', '1 2')).join('');
    candles.forEach((c, i) => {
        const x = 27 + i * 7;
        const [high, top, bottom, low] = c.map(Number);
        out += `<path d="M${x + 0.5} ${high}V${low}" stroke="${c[4] === 'd' ? down : up}"/>`;
        out += bar(x, top, bottom, c[4]);
    });
    out += line(ma60, '#00e6ff') + line(ma30, '#00e600') + line(ma20, '#ff80ff') + line(ma10, '#ff0') + line(ma5, '#fff');
    [84, 105, 161, 308, 315, 525, 707, 805, 903, 1001].forEach(x => {
        out += `<path d="M${x} 68l5 5-5 5-5-5z" fill="#2c9ccc"/>`;
    });
    out += '<text x="976" y="90">9.30</text><path d="M1002 85h8v-2l5 2.500-5 2.500v-2h-8z" fill="#c8c8c8"/>';
    out += '<text x="818" y="406">6.73</text><path d="M817 401h-8v-2l-5 2.500 5 2.500v-2h8z" fill="#c8c8c8"/>';
    out += '<text x="135" y="426" class="sign">q</text>';
    document.getElementById('pricePlot').innerHTML = out;
}

function drawVolume() {
    let out = rule(450, '#a00000', '1 2') + rule(485, '#a00000', '1 2');
    candles.forEach((c, i) => {
        out += bar(27 + i * 7, 521 - Number(c[5]), 521, c[4]);
    });
    out += line(vol5, '#ff0') + line(vol10, '#fff');
    document.getElementById('volumePlot').innerHTML = out;
}

function drawTrend() {
    let out = rule(563, '#a00000') + rule(573, '#783c78') + rule(603, '#a00000', '1 2') + rule(625, '#323232') + rule(634, '#007070') + rule(643, '#ff3232');
    out += line(fast, '#8c8c8c') + line(slow, '#ff0096') + line(trend, '#ff0', 2);
    document.getElementById('trendPlot').innerHTML = out;
}

drawPrice();
drawVolume();
drawTrend();
```
